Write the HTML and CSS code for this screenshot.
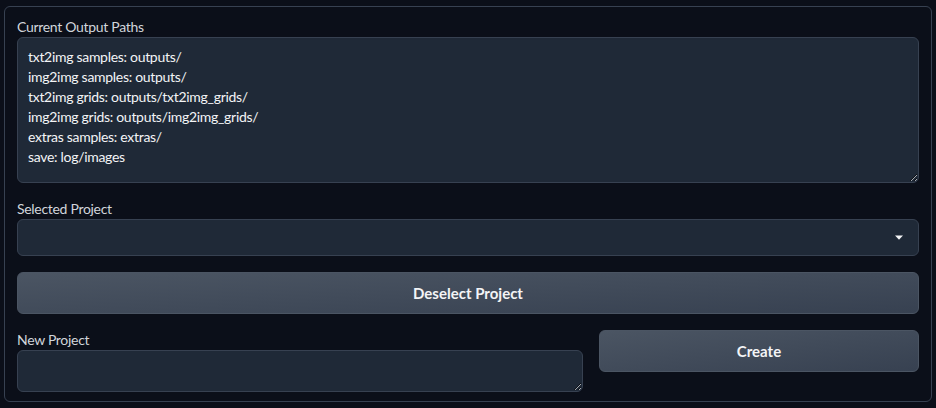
FILE: index.html
```html
<!DOCTYPE html>
<html>
<head>
<meta charset="utf-8">
<link rel="stylesheet" href="styles.css">
</head>
<body>
<div class="panel">
  <div class="field">
    <label class="label">Current Output Paths</label>
    <textarea class="area paths" readonly>txt2img samples: outputs/
img2img samples: outputs/
txt2img grids: outputs/txt2img_grids/
img2img grids: outputs/img2img_grids/
extras samples: extras/
save: log/images</textarea>
  </div>
  <div class="field">
    <label class="label">Selected Project</label>
    <div class="select">
      <svg class="caret" width="8" height="5" viewBox="0 0 8 5"><path d="M0 0.5 L8 0.5 L4 4.8 Z" fill="#f3f4f6"/></svg>
    </div>
  </div>
  <button class="btn wide">Deselect Project</button>
  <div class="row">
    <div class="field">
      <label class="label">New Project</label>
      <textarea class="area small"></textarea>
    </div>
    <button class="btn create">Create</button>
  </div>
</div>
</body>
</html>
```

FILE: styles.css
```css
html, body {
  margin: 0;
  padding: 0;
  background: #0b0f19;
}
body {
  padding: 6px 4px;
  font-family: Lato, "Noto Sans", sans-serif;
  color: #e5e7eb;
}
.panel {
  width: 928px;
  box-sizing: border-box;
  border: 1px solid #374151;
  border-radius: 6px;
  padding: 10px 12px 9px;
  display: flex;
  flex-direction: column;
  gap: 16px;
}
.panel > * {
  flex-shrink: 0;
}
.field {
  display: flex;
  flex-direction: column;
}
.label {
  font-size: 14px;
  letter-spacing: -0.3px;
  line-height: 20px;
  height: 20px;
  color: #d1d5db;
}
.area {
  box-sizing: border-box;
  width: 100%;
  margin: 0;
  display: block;
  background: #1f2937;
  border: 1px solid #374151;
  border-radius: 6px;
  color: #f3f4f6;
  font-family: Lato, "Noto Sans", sans-serif;
  font-size: 14px;
  letter-spacing: -0.3px;
  line-height: 20px;
  padding: 9px 10px;
  resize: vertical;
  outline: none;
  color-scheme: dark;
}
.paths {
  height: 146px;
  overflow: hidden;
}
.small {
  height: 42px;
}
.select {
  box-sizing: border-box;
  height: 37px;
  background: #1f2937;
  border: 1px solid #374151;
  border-radius: 6px;
  display: flex;
  align-items: center;
  justify-content: flex-end;
  padding-right: 15px;
}
.caret {
  display: block;
}
.btn {
  box-sizing: border-box;
  margin: 0;
  border: 1px solid #4b5563;
  border-radius: 6px;
  background: linear-gradient(to bottom right, #4b5563, #374151);
  color: #f3f4f6;
  font-family: Lato, "Noto Sans", sans-serif;
  font-weight: 700;
  font-size: 15px;
}
.wide {
  height: 42px;
  width: 100%;
}
.row {
  display: grid;
  grid-template-columns: 566px 1fr;
  gap: 16px;
  align-items: start;
}
.create {
  height: 42px;
}
```
